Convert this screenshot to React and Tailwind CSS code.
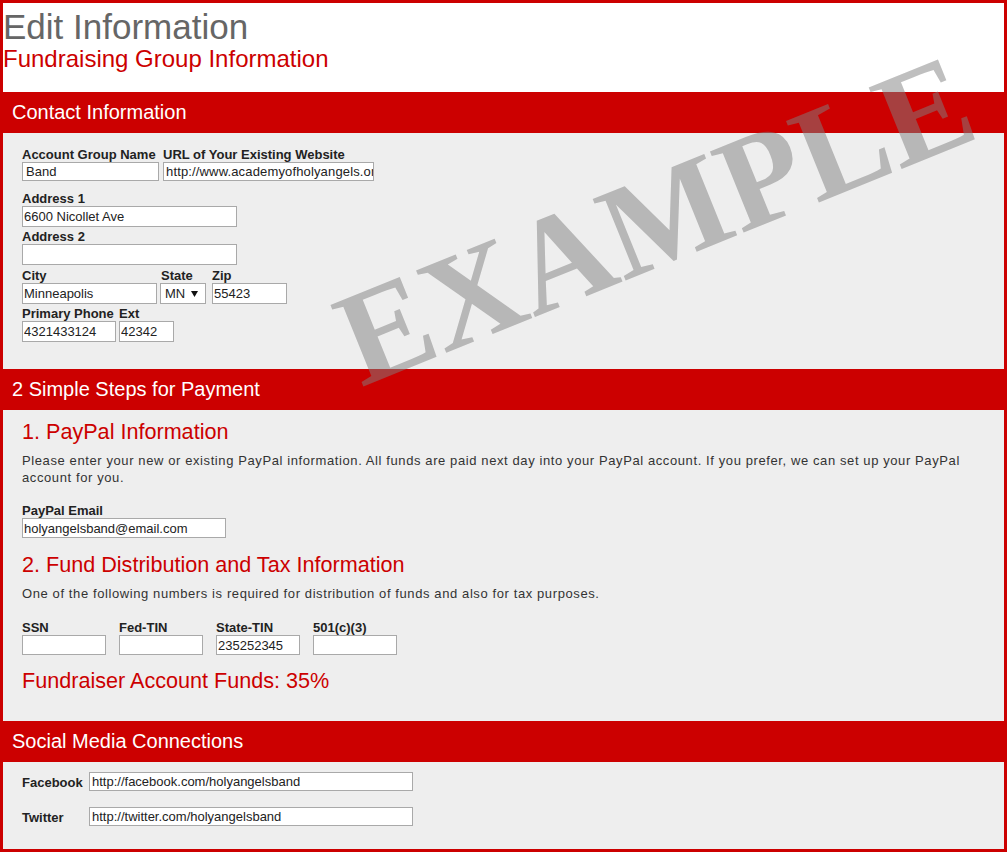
import React from 'react';

const SectionBar = ({ children }) => (
  <div className="h-[41px] bg-[#cc0000] flex items-center pl-[9px]">
    <h2 className="text-[20px] leading-[23px] text-white">{children}</h2>
  </div>
);

const Field = ({ label, value = '', width, height = 'h-[21px]', pad = 'pl-[1px]', className = '' }) => (
  <div className={`flex flex-col ${className}`}>
    <label className="text-[13px] leading-[15px] font-bold text-[#222] whitespace-nowrap">{label}</label>
    <input
      readOnly
      defaultValue={value}
      className={`${width} ${height} ${pad} bg-white border border-[#a9a9a9] text-[13px] text-[#222] outline-none`}
    />
  </div>
);

const Heading = ({ children, className = '' }) => (
  <h3 className={`text-[21.6px] leading-[25px] text-[#cc0000] ${className}`}>{children}</h3>
);

export default function App() {
  return (
    <div className="relative overflow-hidden border-[3px] border-[#cc0000] bg-white font-['Liberation_Sans',Arial,sans-serif] w-[1007px] h-[852px]">
      {/* title */}
      <div className="h-[89px] pt-[6px]">
        <h1 className="text-[35px] leading-[36px] text-[#666]">Edit Information</h1>
        <p className="text-[24px] leading-[28px] text-[#cc0000]">Fundraising Group Information</p>
      </div>

      <SectionBar>Contact Information</SectionBar>
      <div className="h-[236px] bg-[#eeeeee] pt-[14px] pl-[19px]">
        <div className="flex gap-[4px]">
          <Field label="Account Group Name" value="Band" width="w-[137px]" height="h-[19px]" pad="pl-[3px]" />
          <Field label="URL of Your Existing Website" value="http://www.academyofholyangels.org" width="w-[211px]" height="h-[19px]" pad="pl-[2px] tracking-[0.15px]" />
        </div>
        <Field label="Address 1" value="6600 Nicollet Ave" width="w-[215px]" className="mt-[10px]" />
        <Field label="Address 2" value="" width="w-[215px]" className="mt-[2px]" />
        <div className="flex mt-[3px]">
          <Field label="City" value="Minneapolis" width="w-[135px]" height="h-[21px]" />
          <div className="flex flex-col ml-[3px]">
            <span className="text-[13px] leading-[15px] font-bold text-[#222] pl-[1px]">State</span>
            <div className="w-[46px] h-[21px] bg-white border border-[#a9a9a9] flex items-center justify-between pl-[4px] pr-[7px] text-[13px] text-[#222]">
              <span>MN</span>
              <svg width="7" height="6" viewBox="0 0 7 6">
                <path d="M0 0h7L3.5 6z" fill="#111" />
              </svg>
            </div>
          </div>
          <Field label="Zip" value="55423" width="w-[75px]" className="ml-[6px]" />
        </div>
        <div className="flex gap-[3px] mt-[2px]">
          <Field label="Primary Phone" value="4321433124" width="w-[94px]" />
          <Field label="Ext" value="42342" width="w-[55px]" />
        </div>
      </div>

      <SectionBar>2 Simple Steps for Payment</SectionBar>
      <div className="h-[311px] bg-[#eeeeee] pt-[9px] pl-[19px] pr-[30px]">
        <Heading>1. PayPal Information</Heading>
        <p className="mt-[8px] text-[13px] leading-[17px] tracking-[0.6px] text-[#333]">
          Please enter your new or existing PayPal information. All funds are paid next day into your PayPal account. If you prefer, we can set up your PayPal account for you.
        </p>
        <Field label="PayPal Email" value="holyangelsband@email.com" width="w-[204px]" height="h-[20px]" className="mt-[17px]" />
        <Heading className="mt-[14px]">2. Fund Distribution and Tax Information</Heading>
        <p className="mt-[8px] text-[13px] leading-[17px] tracking-[0.6px] text-[#333]">
          One of the following numbers is required for distribution of funds and also for tax purposes.
        </p>
        <div className="flex gap-[13px] mt-[18px]">
          <Field label="SSN" width="w-[84px]" height="h-[20px]" />
          <Field label="Fed-TIN" width="w-[84px]" height="h-[20px]" />
          <Field label="State-TIN" value="235252345" width="w-[84px]" height="h-[20px]" />
          <Field label="501(c)(3)" width="w-[84px]" height="h-[20px]" />
        </div>
        <Heading className="mt-[13px]">Fundraiser Account Funds: 35%</Heading>
      </div>

      <SectionBar>Social Media Connections</SectionBar>
      <div className="h-[87px] bg-[#eeeeee] pt-[10px] pl-[19px] flex flex-col gap-[16px]">
        <div className="flex items-center">
          <span className="w-[67px] text-[13px] leading-[15px] font-bold text-[#222] pt-[2px]">Facebook</span>
          <input readOnly defaultValue="http://facebook.com/holyangelsband" className="w-[324px] h-[19px] pl-[2px] bg-white border border-[#a9a9a9] text-[13px] text-[#222] outline-none" />
        </div>
        <div className="flex items-center">
          <span className="w-[67px] text-[13px] leading-[15px] font-bold text-[#222] pt-[2px]">Twitter</span>
          <input readOnly defaultValue="http://twitter.com/holyangelsband" className="w-[324px] h-[19px] pl-[2px] bg-white border border-[#a9a9a9] text-[13px] text-[#222] outline-none" />
        </div>
      </div>

      {/* watermark */}
      <div className="pointer-events-none absolute left-[652px] top-[217px] -translate-x-1/2 -translate-y-1/2 rotate-[-22deg] whitespace-nowrap font-['Liberation_Serif',serif] font-bold text-[134px] leading-[134px] text-[rgba(128,128,128,0.5)]">
        EXAMPLE
      </div>
    </div>
  );
}
